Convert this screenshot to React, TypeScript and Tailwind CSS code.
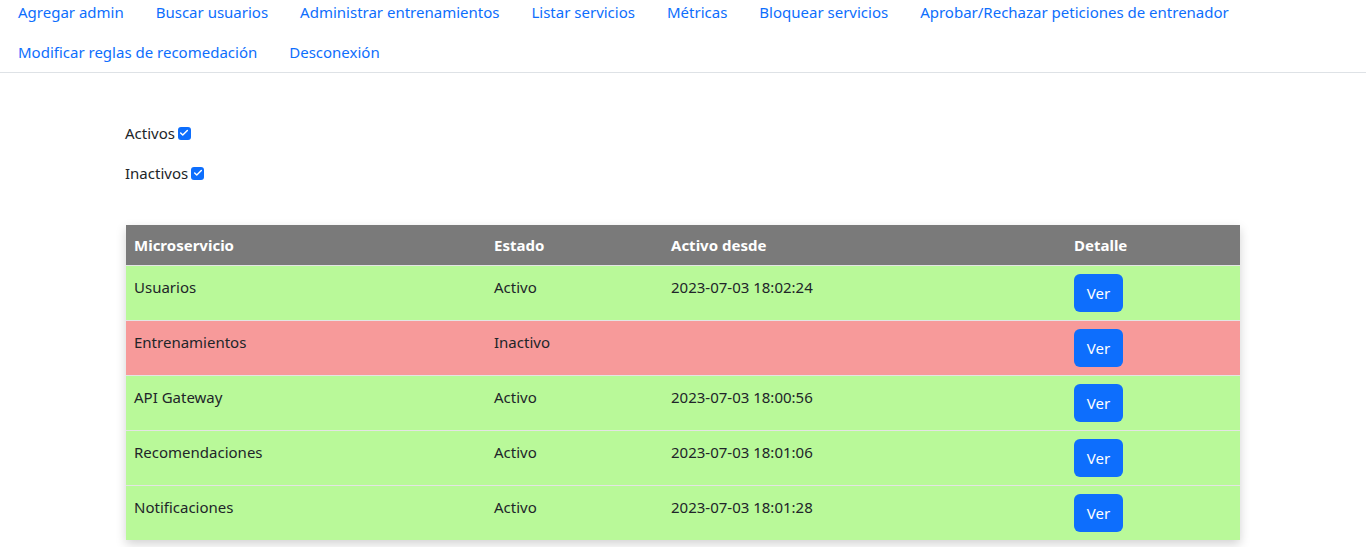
import { Check } from "lucide-react";

const links = [
  "Agregar admin",
  "Buscar usuarios",
  "Administrar entrenamientos",
  "Listar servicios",
  "Métricas",
  "Bloquear servicios",
  "Aprobar/Rechazar peticiones de entrenador",
  "Modificar reglas de recomedación",
  "Desconexión",
];

const services = [
  { name: "Usuarios", active: true, since: "2023-07-03 18:02:24" },
  { name: "Entrenamientos", active: false, since: "" },
  { name: "API Gateway", active: true, since: "2023-07-03 18:00:56" },
  { name: "Recomendaciones", active: true, since: "2023-07-03 18:01:06" },
  { name: "Notificaciones", active: true, since: "2023-07-03 18:01:28" },
];

function CheckBox() {
  return (
    <span className="inline-flex items-center justify-center w-[13px] h-[13px] rounded-[3px] bg-[#0d6efd] ml-[3px]">
      <Check size={10} strokeWidth={3.5} color="white" />
    </span>
  );
}

export default function App() {
  return (
    <div className="min-h-screen bg-white text-[#212529] text-[15px] font-['Noto_Sans',sans-serif]">
      <nav className="flex flex-wrap -mt-2 pl-[2px] border-b border-[#dee2e6]">
        {links.map((l) => (
          <a key={l} className="px-4 py-2 leading-6 text-[#0d6efd] cursor-pointer">
            {l}
          </a>
        ))}
      </nav>

      <div className="pl-[125px] pt-[48px]">
        <div className="flex items-center leading-6">
          Activos <CheckBox />
        </div>
        <div className="flex items-center leading-6 mt-4">
          Inactivos <CheckBox />
        </div>
      </div>

      <div className="pl-[126px] pt-[40px]">
        <table className="w-[1114px] border-collapse shadow-[0_4px_10px_rgba(0,0,0,0.18)]">
          <thead>
            <tr className="bg-[#7a7a7a] text-white font-bold text-left h-10">
              <th className="w-[360px] px-2">Microservicio</th>
              <th className="w-[177px] px-2">Estado</th>
              <th className="w-[403px] px-2">Activo desde</th>
              <th className="px-2">Detalle</th>
            </tr>
          </thead>
          <tbody>
            {services.map((s) => (
              <tr
                key={s.name}
                className={`h-[55px] border-t border-[#e4e4e4] ${s.active ? "bg-[#b9f999]" : "bg-[#f79a9a]"}`}
              >
                <td className="px-2 pt-[9px] align-top leading-6">{s.name}</td>
                <td className="px-2 pt-[9px] align-top leading-6">{s.active ? "Activo" : "Inactivo"}</td>
                <td className="px-2 pt-[9px] align-top leading-6">{s.since}</td>
                <td className="px-2 align-middle">
                  <button className="bg-[#0d6efd] text-white rounded-md w-[49px] h-[38px] leading-6">Ver</button>
                </td>
              </tr>
            ))}
          </tbody>
        </table>
      </div>
    </div>
  );
}
